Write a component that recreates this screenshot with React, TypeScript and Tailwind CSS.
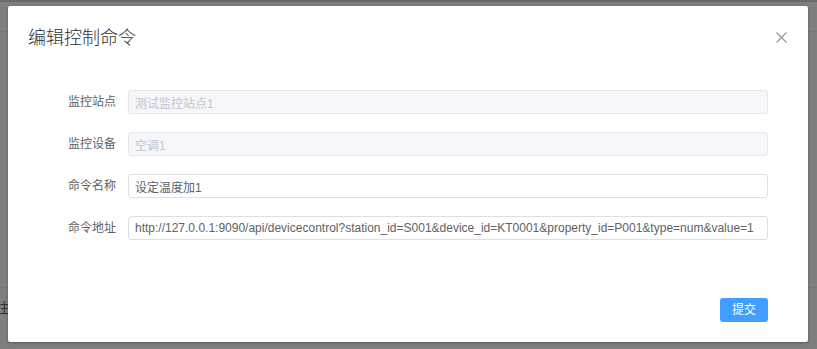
import React, { useState } from 'react';

const FONT = { fontFamily: '"Liberation Sans", Arial, "Noto Sans CJK SC", sans-serif' };

const FIELDS = [
  { label: '监控站点', value: '测试监控站点1', disabled: true },
  { label: '监控设备', value: '空调1', disabled: true },
  { label: '命令名称', value: '设定温度加1', disabled: false },
  {
    label: '命令地址',
    value:
      'http://127.0.0.1:9090/api/devicecontrol?station_id=S001&device_id=KT0001&property_id=P001&type=num&value=1',
    disabled: false,
  },
];

const App = () => {
  const [values, setValues] = useState(FIELDS.map((f) => f.value));

  return (
    <div className="relative w-[817px] h-[349px] overflow-hidden bg-white" style={FONT}>
      {/* Page behind the dialog */}
      <div className="flex flex-col text-[12px] text-[#606266]">
        <div className="h-[2px] bg-[#d0d3d8]" />
        <div className="h-[30px] border-b border-[#ebeef5]" />
        <div className="h-[256px] border-b border-[#ebeef5]" />
        <div className="h-[40px] flex items-center pl-0 -ml-[4px] text-[13px]">往</div>
      </div>

      {/* Overlay */}
      <div className="absolute inset-0 bg-black/50" />

      {/* Dialog */}
      <div className="absolute left-[8px] top-[6px] w-[800px] bg-white rounded-[2px] shadow-[0_1px_3px_rgba(0,0,0,0.3)]">
        <div className="relative pt-5 px-5 pb-[10px]">
          <span className="block text-[18px] leading-[24px] text-[#303133] font-light">编辑控制命令</span>
          <button className="absolute right-[21px] top-[26px] w-[11px] h-[11px] text-[#909399]">
            <svg viewBox="0 0 11 11" className="w-[11px] h-[11px]" fill="none" stroke="currentColor" strokeWidth="1.1">
              <path d="M0.5 0.5 L10.5 10.5 M10.5 0.5 L0.5 10.5" />
            </svg>
          </button>
        </div>

        <div className="pt-[30px] pb-[30px] pl-5 pr-[40px]">
          {FIELDS.map((f, i) => (
            <div key={f.label} className="flex items-center mb-[18px]">
              <label className="w-[100px] pr-[12px] text-right text-[12px] text-[#606266]">{f.label}</label>
              <input
                value={values[i]}
                disabled={f.disabled}
                onChange={(e) => {
                  const next = [...values];
                  next[i] = e.target.value;
                  setValues(next);
                }}
                className={`flex-1 h-[24px] px-[6px] rounded-[3px] border text-[12px] outline-none ${
                  f.disabled
                    ? 'bg-[#f5f7fa] border-[#e4e7ed] text-[#c0c4cc]'
                    : 'bg-white border-[#dcdfe6] text-[#606266]'
                }`}
                style={FONT}
              />
            </div>
          ))}
        </div>

        <div className="flex justify-end pt-[10px] pb-[20px] pr-[40px]">
          <button className="w-[48px] h-[24px] rounded-[3px] bg-[#409eff] text-white text-[12px]">提交</button>
        </div>
      </div>
    </div>
  );
};

export default App;
